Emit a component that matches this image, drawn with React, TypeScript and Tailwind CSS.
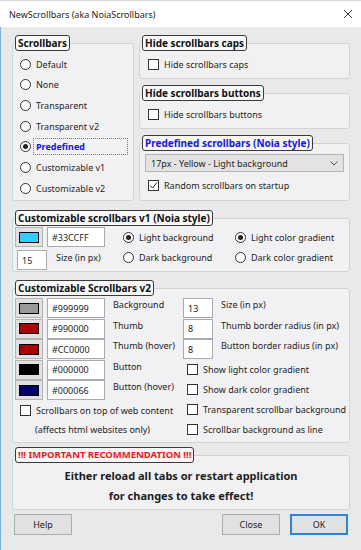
import React from 'react';

interface GroupProps {
  title: string;
  titleClass?: string;
  className?: string;
  innerClass?: string;
  children?: React.ReactNode;
}

const Group: React.FC<GroupProps> = ({
  title,
  titleClass = 'text-[#111] text-[10px]',
  className = '',
  innerClass = '',
  children,
}) => {
  return (
    <div className={`relative pt-[8px] ${className}`}>
      <div className={`h-full border border-[#d3d3d6] rounded-[3px] bg-[#f1f1f3] ${innerClass}`}>{children}</div>
      {/* legend sits over the top border */}
      <div
        className={`absolute left-[3px] top-0 h-[16px] px-[2px] flex items-center border border-[#3a3a3a] rounded-[3px] bg-[#f8f8f8] font-bold leading-none ${titleClass}`}
      >
        {title}
      </div>
    </div>
  );
};

const Radio: React.FC<{ label: string; checked?: boolean; focused?: boolean }> = ({ label, checked, focused }) => (
  <div className="flex items-center h-[20.67px] gap-[2px]">
    <span className="w-[11px] h-[11px] rounded-full border border-[#333] bg-white flex items-center justify-center shrink-0">
      {checked && <span className="w-[5px] h-[5px] rounded-full bg-[#222]" />}
    </span>
    <span
      className={
        focused
          ? 'h-[17px] w-[95px] px-[2px] flex items-center border border-dotted border-[#777] text-[#1515ee] font-bold'
          : 'h-[17px] px-[2px] flex items-center border border-transparent'
      }
    >
      {label}
    </span>
  </div>
);

const Check: React.FC<{ label: string; checked?: boolean }> = ({ label, checked }) => (
  <div className="flex items-center gap-[5px]">
    <span className="w-[11px] h-[11px] border border-[#333] bg-white flex items-center justify-center shrink-0">
      {checked && (
        <svg width="9" height="9" viewBox="0 0 9 9">
          <path d="M1 4.5 L3.5 7 L8 1.5" fill="none" stroke="#222" strokeWidth="1" />
        </svg>
      )}
    </span>
    <span>{label}</span>
  </div>
);

const Swatch: React.FC<{ color: string }> = ({ color }) => (
  <div className="w-[28px] h-[20px] bg-[#e1e1e1] border border-[#b4b4b4] flex items-center justify-center shrink-0">
    <div className={`w-[20px] h-[11px] border border-black ${color}`} />
  </div>
);

const Field: React.FC<{ value: string; className?: string }> = ({ value, className = 'w-[58px]' }) => (
  <div className={`h-[20px] bg-white border border-[#a9abb1] flex items-center px-[4px] shrink-0 ${className}`}>{value}</div>
);

const Button: React.FC<{ label: string; primary?: boolean }> = ({ label, primary }) => (
  <div
    className={
      primary
        ? 'w-[58px] h-[21px] bg-[#e1e1e1] border-2 border-[#2a86d8] flex items-center justify-center'
        : 'w-[58px] h-[21px] bg-[#e1e1e1] border border-[#adadad] flex items-center justify-center'
    }
  >
    {label}
  </div>
);

const v2Rows = [
  { color: 'bg-[#999999]', value: '#999999', label: 'Background' },
  { color: 'bg-[#aa0000]', value: '#990000', label: 'Thumb' },
  { color: 'bg-[#aa0000]', value: '#CC0000', label: 'Thumb (hover)' },
  { color: 'bg-[#000000]', value: '#000000', label: 'Button' },
  { color: 'bg-[#000066]', value: '#000066', label: 'Button (hover)' },
];

export default function App() {
  return (
    <div className="w-[361px] h-[550px] flex flex-col bg-[#e9e9ec] text-[9px] leading-none text-[#1e1e1e] font-['Noto_Sans',sans-serif] overflow-hidden">
      {/* title bar */}
      <div className="h-[27px] shrink-0 bg-white border-t border-[#d6d6d6] flex items-center justify-between pl-[9px] pr-[8px]">
        <span className="text-[9px]">NewScrollbars (aka NoiaScrollbars)</span>
        <svg width="10" height="10" viewBox="0 0 10 10">
          <path d="M1 1 L9 9 M9 1 L1 9" stroke="#333" strokeWidth="1" />
        </svg>
      </div>

      <div className="flex-1 border-l border-[#7fb2e3] pl-[11px] pr-[11px] pt-[8px] flex flex-col">
        <div className="flex gap-[5px] h-[166px]">
          <Group title="Scrollbars" className="w-[122px]" innerClass="pl-[7px] pt-[10px]">
            <Radio label="Default" />
            <Radio label="None" />
            <Radio label="Transparent" />
            <Radio label="Transparent v2" />
            <Radio label="Predefined" checked focused />
            <Radio label="Customizable v1" />
            <Radio label="Customizable v2" />
          </Group>

          <div className="flex-1 flex flex-col gap-[6px]">
            <Group title="Hide scrollbars caps" className="h-[44px]" innerClass="pl-[8px] pt-[15px]">
              <Check label="Hide scrollbars caps" />
            </Group>
            <Group title="Hide scrollbars buttons" className="h-[44px]" innerClass="pl-[8px] pt-[15px]">
              <Check label="Hide scrollbars buttons" />
            </Group>
            <Group
              title="Predefined scrollbars (Noia style)"
              titleClass="text-[#1515ee] text-[10px]"
              className="flex-1"
              innerClass="pl-[5px] pt-[10px]"
            >
              <div className="w-[199px] h-[18px] bg-[#e3e3e3] border border-[#b4b4b4] flex items-center justify-between pl-[5px] pr-[5px]">
                <span>17px - Yellow - Light background</span>
                <svg width="8" height="5" viewBox="0 0 8 5">
                  <path d="M0.5 0.5 L4 4 L7.5 0.5" fill="none" stroke="#555" strokeWidth="1" />
                </svg>
              </div>
              <div className="mt-[8px] ml-[3px]">
                <Check label="Random scrollbars on startup" checked />
              </div>
            </Group>
          </div>
        </div>

        <Group title="Customizable scrollbars v1 (Noia style)" className="mt-[9px] h-[62px]" innerClass="pl-[2px] pt-[8px] flex">
          <div className="w-[108px] flex flex-col gap-[3px]">
            <div className="flex gap-[4px]">
              <Swatch color="bg-[#33ccff]" />
              <Field value="#33CCFF" />
            </div>
            <div className="flex pl-[2px] gap-[9px]">
              <Field value="15" className="w-[30px]" />
              <span className="pt-[3px]">Size (in px)</span>
            </div>
          </div>
          <div className="w-[112px] flex flex-col">
            <Radio label="Light background" checked />
            <Radio label="Dark background" />
          </div>
          <div className="flex flex-col">
            <Radio label="Light color gradient" checked />
            <Radio label="Dark color gradient" />
          </div>
        </Group>

        <Group title="Customizable Scrollbars v2" className="mt-[8px] h-[163px]" innerClass="pl-[2px] pt-[9px] flex">
          <div className="w-[168px] flex flex-col">
            {v2Rows.map((r) => (
              <div key={r.label} className="h-[20.5px] flex items-start gap-[4px]">
                <Swatch color={r.color} />
                <Field value={r.value} />
                <span className="ml-[4px] pt-[2px]">{r.label}</span>
              </div>
            ))}
            <div className="h-[19px] flex items-center pl-[5px]">
              <Check label="Scrollbars on top of web content" />
            </div>
            <div className="h-[19px] flex items-center pl-[20px]">(affects html websites only)</div>
          </div>
          <div className="flex flex-col">
            {['Size (in px)', 'Thumb border radius (in px)', 'Button border radius (in px)'].map((l, i) => (
              <div key={l} className="h-[20.5px] flex items-start gap-[8px]">
                <Field value={i === 0 ? '13' : '8'} className="w-[30px]" />
                <span className="pt-[2px]">{l}</span>
              </div>
            ))}
            <div className="flex flex-col pl-[4px]">
              {[
                'Show light color gradient',
                'Show dark color gradient',
                'Transparent scrollbar background',
                'Scrollbar background as line',
              ].map((l) => (
                <div key={l} className="h-[20px] flex items-center">
                  <Check label={l} />
                </div>
              ))}
            </div>
          </div>
        </Group>

        <Group
          title="!!! IMPORTANT RECOMMENDATION !!!"
          titleClass="text-[#f01818] text-[9.5px]"
          className="mt-[4px] h-[63px]"
          innerClass="pt-[9px] flex flex-col items-center font-bold text-[11px]"
        >
          <div className="h-[20px] flex items-center">Either reload all tabs or restart application</div>
          <div className="h-[20px] flex items-center">for changes to take effect!</div>
        </Group>

        <div className="mt-[4px] flex items-center pl-[2px] pr-[2px]">
          <Button label="Help" />
          <div className="flex-1" />
          <div className="flex gap-[10px]">
            <Button label="Close" />
            <Button label="OK" primary />
          </div>
        </div>
      </div>
    </div>
  );
}
